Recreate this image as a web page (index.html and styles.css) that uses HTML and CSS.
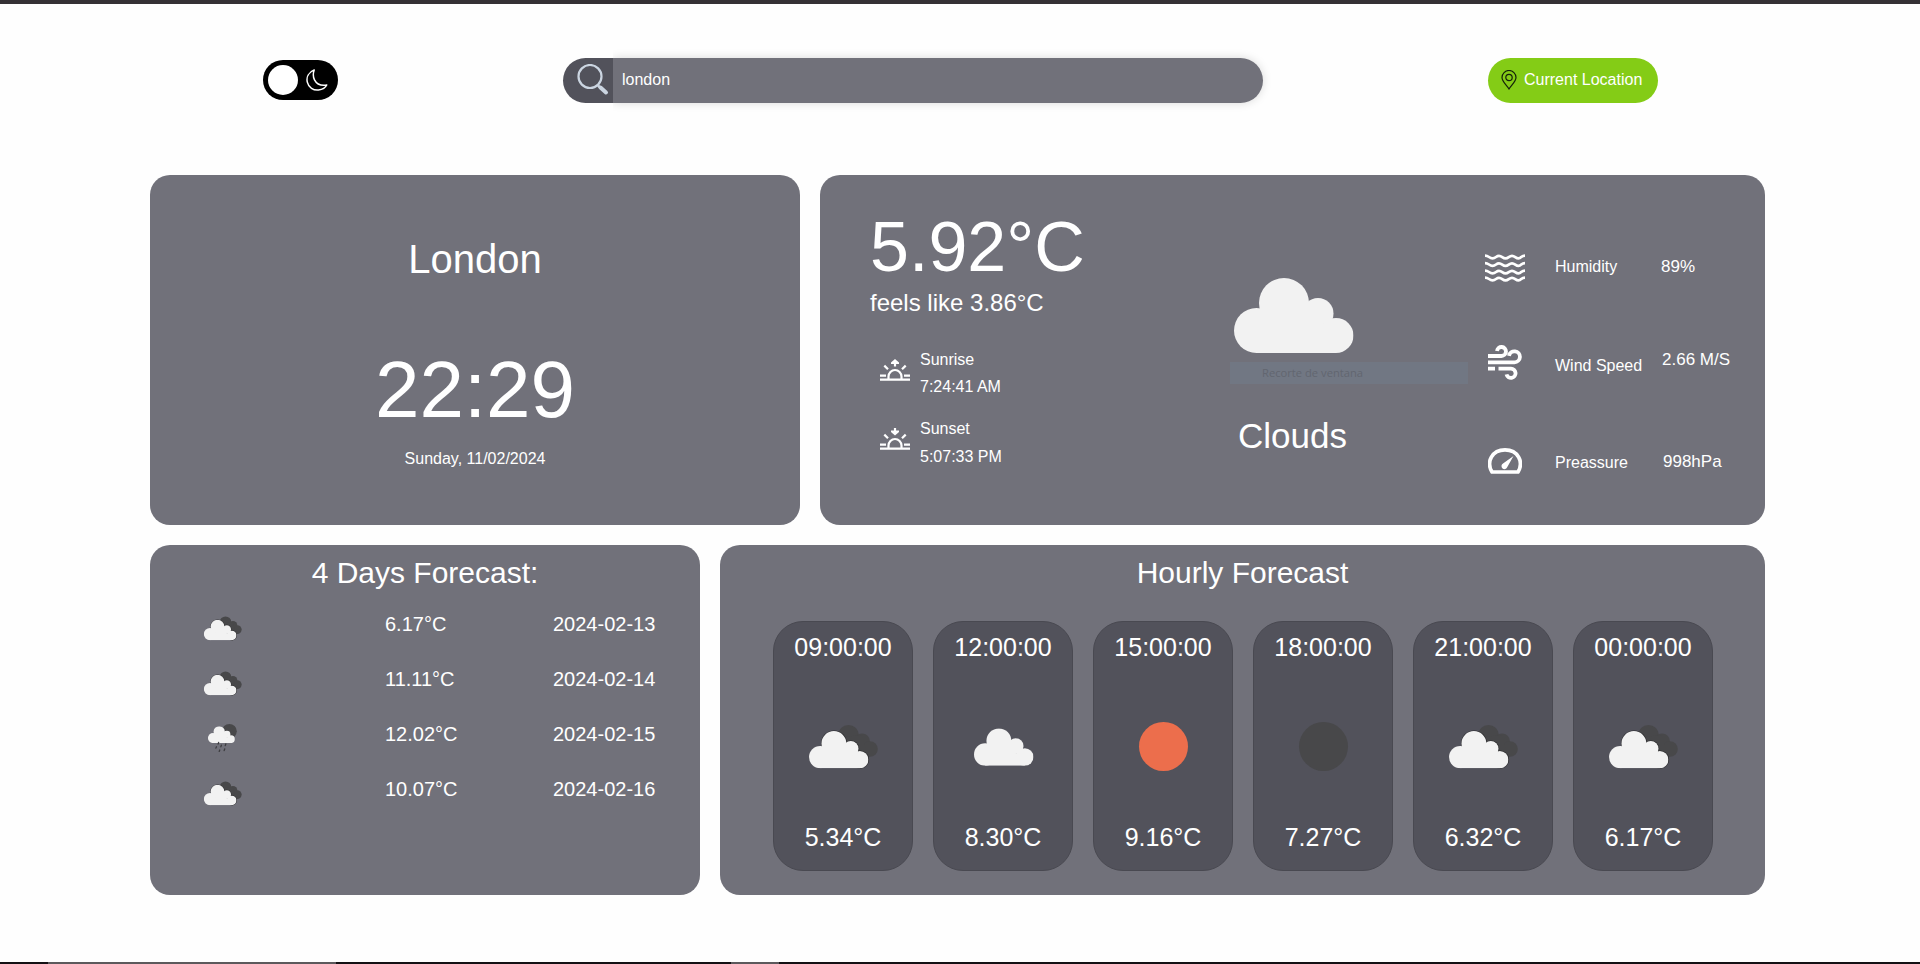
FILE: index.html
```html
<!DOCTYPE html>
<html lang="en">
<head>
<meta charset="utf-8">
<title>Weather</title>
<link rel="stylesheet" href="styles.css">
</head>
<body>
<svg class="defs" width="0" height="0" aria-hidden="true">
  <symbol id="cloud" viewBox="0 0 119.5 75">
    <g fill="#f2f2f2"><circle cx="22.5" cy="52.5" r="22.5"/><circle cx="50" cy="25" r="25"/><circle cx="84" cy="35.5" r="15.5"/><circle cx="102" cy="57.5" r="17.5"/><path d="M22.5 48H50V30H84V50H102V75H22.500Z"/></g>
  </symbol>
  <symbol id="cloud-box" viewBox="0 0 100 100">
    <use href="#cloud" x="21" y="31.300" width="59.500" height="37.500"/>
  </symbol>
  <symbol id="broken" viewBox="0 0 100 100">
    <g fill="#48484a"><circle cx="55.500" cy="38.500" r="10.500"/><circle cx="69" cy="44.500" r="8"/><circle cx="77" cy="52" r="7.800"/><path d="M50 40L69 38L74 58L77 59.800H50Z"/></g>
    <g fill="#2b2b2d"><circle cx="41" cy="46.500" r="13"/><circle cx="58" cy="51.700" r="8.300"/><circle cx="67" cy="62.500" r="9.100"/></g>
    <use href="#cloud" x="16" y="34" width="59.500" height="37.300"/>
  </symbol>
  <symbol id="rain" viewBox="0 0 100 100">
    <circle cx="62.500" cy="37" r="13.500" fill="#48484a"/>
    <use href="#cloud" x="23.500" y="27.500" width="49" height="30.800"/>
    <g stroke="#3d3d40" stroke-width="2.400" stroke-linecap="round"><path d="M43 57l-1 3M39 65l-1 2.500M48 62l-1 3M56 60l-1 3M45 71l-1 2.500M54 69l-1 3"/></g>
  </symbol>
  <symbol id="horizon-sun" viewBox="0 0 30 22">
    <g fill="none" stroke="#fff" stroke-width="2.200"><path d="M0 20.700H30M0 16.700H6M24 16.700H30M8.500 20V17.500a6.500 6.500 0 0 1 13 0V20M4.300 6.600L8 10.300M25.700 6.600L22 10.300"/></g>
  </symbol>
</svg>

<div class="topbar"></div>

<header class="header">
  <div class="toggle">
    <span class="knob"></span>
    <svg class="moon" viewBox="0 0 22 22" fill="none" stroke="#fff" stroke-width="1.500" stroke-linejoin="round"><path d="M8.200 1C2.500 3.200.2 8.200 1.300 13.200C2.500 18.500 7.500 21.600 12.500 21C16.300 20.500 19.500 18.600 20.700 16C14.600 17 10.500 14.700 8.500 10.800C7 7.800 7 4.300 8.200 1Z"/></svg>
  </div>
  <div class="search">
    <div class="search-icon">
      <svg viewBox="0 0 32 32" fill="none" stroke="#cbd5e1"><circle cx="13" cy="12.500" r="11.500" stroke-width="2.200"/><path d="M21 21.500L23 23.500" stroke-width="2.500"/><path d="M23.500 23.500L29 28.500" stroke-width="4" stroke-linecap="round"/></svg>
    </div>
    <div class="search-text">london</div>
  </div>
  <div class="location">
    <svg viewBox="0 0 16 20" fill="none" stroke="#14210a" stroke-width="1.200"><path d="M8 19C5.500 15 1 11.500 1 7.500a7 7 0 0 1 14 0C15 11.500 10.500 15 8 19Z"/><circle cx="8" cy="7.500" r="3.200"/></svg>
    <span>Current Location</span>
  </div>
</header>

<main class="main">
  <div class="row">
    <section class="card city">
      <h1 class="city-name">London</h1>
      <div class="clock">22:29</div>
      <div class="date">Sunday, 11/02/2024</div>
    </section>

    <section class="card now">
      <div class="temps">
        <div class="temp">5.92°C</div>
        <div class="feels">feels like 3.86°C</div>
        <div class="sun">
          <svg class="sun-icon" viewBox="0 0 30 22"><use href="#horizon-sun"/><path d="M15 7.500V2" stroke="#fff" stroke-width="2.200"/><path d="M11 5V3.500L15 0L19 3.500V5Z" fill="#fff"/></svg>
          <div><div>Sunrise</div><div>7:24:41 AM</div></div>
        </div>
        <div class="sun sunset">
          <svg class="sun-icon" viewBox="0 0 30 22"><use href="#horizon-sun"/><path d="M15 0V5" stroke="#fff" stroke-width="2.200"/><path d="M11 2.500V4L15 7.500L19 4V2.500Z" fill="#fff"/></svg>
          <div><div>Sunset</div><div>5:07:33 PM</div></div>
        </div>
      </div>
      <div class="sky">
        <svg class="sky-icon"><use href="#cloud"/></svg>
        <div class="sky-label">Clouds</div>
      </div>
      <div class="stats">
        <div class="stat humidity">
          <svg width="40" height="28" viewBox="0 0 40 28" fill="none" stroke="#fff" stroke-width="2.700"><path id="wave" d="M0 1.600C4 1.600 4 4.300 7.500 4.300S11 1.800 14 1.800S17.500 4.300 20.500 4.300S24 1.800 27 1.800S30.500 4.300 33.500 4.300S36 1.600 40 1.600"/><use href="#wave" y="7.500"/><use href="#wave" y="15"/><use href="#wave" y="22"/></svg>
          <span class="stat-name">Humidity</span><span class="stat-value">89%</span>
        </div>
        <div class="stat wind">
          <svg width="34" height="35" viewBox="0 0 34 35" fill="none" stroke="#fff" stroke-width="3.800"><path d="M0 11H13.500a4.500 4.500 0 1 0-4.500-5M0 17.300H26.500a5.500 5.500 0 1 0-5.500-6.500M0 23.700H7M10.500 23.700H23a4.600 4.600 0 1 1-4.500 5.700"/></svg>
          <span class="stat-name">Wind Speed</span><span class="stat-value">2.66 M/S</span>
        </div>
        <div class="stat pressure">
          <svg width="34" height="26" viewBox="0 0 34 26"><path d="M4 24C-2 14 4 1.900 17 1.900S36 14 30 24Z" fill="none" stroke="#fff" stroke-width="3.700" stroke-linejoin="round"/><path d="M25.500 8L15 15.500a3 3 0 1 0 4.300 3.600Z" fill="#fff"/></svg>
          <span class="stat-name">Preassure</span><span class="stat-value">998hPa</span>
        </div>
      </div>
      <div class="snip">Recorte de ventana</div>
    </section>
  </div>

  <div class="row">
    <section class="card daily">
      <h2 class="title">4 Days Forecast:</h2>
      <div class="day"><svg><use href="#broken"/></svg><span>6.17°C</span><span>2024-02-13</span></div>
      <div class="day"><svg><use href="#broken"/></svg><span>11.11°C</span><span>2024-02-14</span></div>
      <div class="day"><svg><use href="#rain"/></svg><span>12.02°C</span><span>2024-02-15</span></div>
      <div class="day"><svg><use href="#broken"/></svg><span>10.07°C</span><span>2024-02-16</span></div>
    </section>

    <section class="card hourly">
      <h2 class="title">Hourly Forecast</h2>
      <div class="hours">
        <div class="hour"><span>09:00:00</span><svg><use href="#broken"/></svg><span>5.34°C</span></div>
        <div class="hour"><span>12:00:00</span><svg><use href="#cloud-box"/></svg><span>8.30°C</span></div>
        <div class="hour"><span>15:00:00</span><svg viewBox="0 0 100 100"><circle cx="50.500" cy="49.500" r="24.500" fill="#ec6e4c"/></svg><span>9.16°C</span></div>
        <div class="hour"><span>18:00:00</span><svg viewBox="0 0 100 100"><circle cx="50.500" cy="49.500" r="24.500" fill="#48484a"/></svg><span>7.27°C</span></div>
        <div class="hour"><span>21:00:00</span><svg><use href="#broken"/></svg><span>6.32°C</span></div>
        <div class="hour"><span>00:00:00</span><svg><use href="#broken"/></svg><span>6.17°C</span></div>
      </div>
    </section>
  </div>
</main>

<footer class="edge"><i></i><i></i><i></i><i></i><i></i></footer>
</body>
</html>
```
FILE: styles.css
```css
* { box-sizing: border-box; }

body {
  margin: 0;
  height: 964px;
  overflow: hidden;
  display: flex;
  flex-direction: column;
  background: #fefefe;
  color: #fff;
  font: 16px/24px "Liberation Sans", Arial, sans-serif;
}

svg { display: block; flex: none; }
.defs { position: absolute; }
h1, h2 { margin: 0; font-weight: 400; }

.topbar { height: 4px; background: #353135; flex: none; }

.header {
  display: flex;
  align-items: center;
  gap: 225px;
  padding: 54px 0 0 263px;
}

.toggle {
  display: flex;
  align-items: center;
  width: 75px;
  height: 40px;
  margin-bottom: 1px;
  padding-left: 5px;
  border-radius: 20px;
  background: #000;
}
.knob { width: 30px; height: 30px; border-radius: 50%; background: #fff; }
.moon { width: 22px; height: 22px; margin-left: 8px; }

.search {
  display: flex;
  width: 700px;
  height: 45px;
  border-radius: 23px;
}
.search-icon {
  width: 50px;
  padding: 6px 0 0 14px;
  border-radius: 23px 0 0 23px;
  background: #52525b;
}
.search-icon svg { width: 32px; height: 32px; }
.search-text {
  flex: 1;
  padding: 10px 9px;
  border-radius: 0 23px 23px 0;
  background: #71717a;
  box-shadow: 0 0 10px rgba(0, 0, 0, .15);
  clip-path: inset(-20px -20px -20px 0);
}

.location {
  display: flex;
  width: 170px;
  height: 45px;
  padding: 10px 0 0 13px;
  gap: 7px;
  border-radius: 23px;
  background: #84cc16;
}
.location svg { width: 16px; height: 20px; margin-top: 2px; }

.main {
  display: flex;
  flex-direction: column;
  gap: 20px;
  padding: 72px 155px 0 150px;
}
.row { display: flex; gap: 20px; }
.card { height: 350px; border-radius: 20px; background: #71717a; }

.city {
  width: 650px;
  display: flex;
  flex-direction: column;
  align-items: center;
  padding-top: 64px;
}
.city-name { font-size: 40px; line-height: 40px; }
.clock { margin-top: 71px; font-size: 80px; line-height: 80px; }
.date { margin-top: 17px; }

.now { flex: 1; display: flex; padding-left: 50px; position: relative; }
.temps { width: 364px; padding-top: 36px; }
.temp { font-size: 70px; line-height: 72px; }
.feels { margin-top: 4px; font-size: 24px; line-height: 32px; }
.sun { display: flex; gap: 10px; margin: 27px 0 0 10px; line-height: 27px; }
.sunset { margin-top: 15px; line-height: 28px; }
.sun-icon { width: 30px; height: 22px; margin-top: 13px; }

.sky { width: 251px; padding-top: 103px; }
.sky-icon { width: 119.5px; height: 75px; }
.sky-label { margin: 63px 0 0 4px; font-size: 35px; line-height: 40px; }

.stats { padding-top: 79px; }
.stat { display: flex; align-items: flex-start; height: 40px; }
.stat-name { width: 106px; margin-left: 30px; }
.stat-value { font-size: 17px; }
.humidity span { margin-top: 1px; }
.wind { margin-top: 51px; }
.pressure { margin-top: 62px; }
.wind svg, .pressure svg { margin: 0 3px; }
.wind .stat-name { margin-top: 9px; }
.wind .stat-value { margin: 3px 0 0 1px; }
.pressure svg { margin-top: 1px; }
.pressure .stat-name { margin-top: 4px; }
.pressure .stat-value { margin: 3px 0 0 2px; }

.snip {
  position: absolute;
  left: 410px;
  top: 187px;
  width: 238px;
  height: 22px;
  padding-left: 32px;
  background: #717783;
  color: #626670;
  font: 11.2px/22px "Open Sans", "Noto Sans", sans-serif;
}

.title { font-size: 30px; line-height: 36px; text-align: center; }
.daily { width: 550px; padding-top: 10px; }
.daily .title { margin-bottom: 9px; }
.day {
  display: grid;
  grid-template-columns: 190px 168px 1fr;
  height: 55px;
  padding-left: 45px;
  font-size: 20px;
  line-height: 28px;
}
.day svg { width: 55px; height: 55px; margin-top: 1px; }
.day span { padding-top: 10px; }

.hourly { flex: 1; padding-top: 10px; }
.hours { display: flex; gap: 20px; padding: 30px 0 0 53px; }
.hour {
  display: flex;
  flex-direction: column;
  align-items: center;
  width: 140px;
  height: 250px;
  padding-top: 10px;
  border: 1px solid #494951;
  border-radius: 30px;
  background: #52525b;
  font-size: 25px;
  line-height: 30px;
}
.hour svg { width: 100px; height: 100px; margin: 35px 0 25px; }

.edge { display: flex; height: 2px; margin-top: auto; }
.edge i { background: #141114; }
.edge i:nth-child(1) { width: 48px; }
.edge i:nth-child(2) { width: 288px; background: #5c595c; }
.edge i:nth-child(3) { width: 395px; }
.edge i:nth-child(4) { width: 48px; background: #5c595c; }
.edge i:nth-child(5) { flex: 1; }
```
